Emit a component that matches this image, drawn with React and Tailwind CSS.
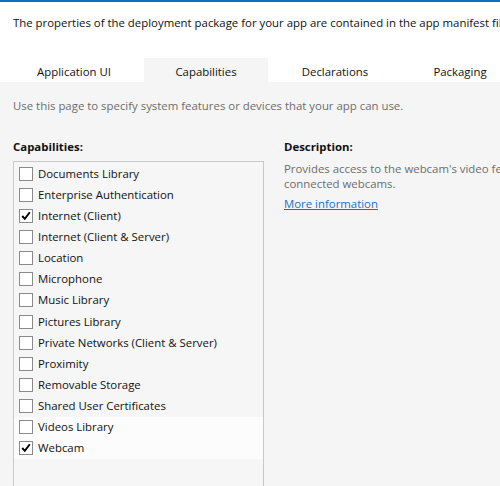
import React from "react";

const items = [
  ["Documents Library", false],
  ["Enterprise Authentication", false],
  ["Internet (Client)", true],
  ["Internet (Client & Server)", false],
  ["Location", false],
  ["Microphone", false],
  ["Music Library", false],
  ["Pictures Library", false],
  ["Private Networks (Client & Server)", false],
  ["Proximity", false],
  ["Removable Storage", false],
  ["Shared User Certificates", false],
  ["Videos Library", false],
  ["Webcam", true],
];

function Box({ checked }) {
  return (
    <div className="w-[14px] h-[14px] border border-[#8a8a8a] bg-white flex items-center justify-center shrink-0">
      {checked && (
        <svg width="10" height="10" viewBox="0 0 10 10">
          <path d="M1.2 5 L3.8 7.8 L8.8 1.2" fill="none" stroke="#000" strokeWidth="1.9" />
        </svg>
      )}
    </div>
  );
}

export default function App() {
  return (
    <div
      className="w-[500px] h-[486px] overflow-hidden bg-white text-[#111] text-[11.4px] flex flex-col"
      style={{ fontFamily: '"Open Sans", "Noto Sans", sans-serif' }}
    >
      <div className="h-[2px] bg-[#0e70c0] shrink-0" />
      <div className="h-[56px] shrink-0 pl-[13px] pt-[13px] whitespace-nowrap leading-[16px]">
        The properties of the deployment package for your app are contained in the app manifest file.
      </div>
      <div className="h-[24px] shrink-0 flex items-stretch whitespace-nowrap">
        <div className="w-[4px] shrink-0" />
        <div className="w-[140px] shrink-0 flex items-center justify-center pt-[3px]">Application UI</div>
        <div className="w-[124px] shrink-0 flex items-center justify-center pt-[3px] bg-[#f5f5f5]">Capabilities</div>
        <div className="w-[134px] shrink-0 flex items-center justify-center pt-[3px]">Declarations</div>
        <div className="w-[116px] shrink-0 flex items-center justify-center pt-[3px]">Packaging</div>
      </div>
      <div className="flex-1 bg-[#f5f5f5] flex flex-col">
        <div className="pl-[13px] pt-[16px] text-[#6d6d6d] whitespace-nowrap leading-[16px]">
          Use this page to specify system features or devices that your app can use.
        </div>
        <div className="flex mt-[25px]">
          <div className="w-[251px] ml-[13px] shrink-0 flex flex-col">
            <div className="font-bold leading-[16px] mb-[6px]">Capabilities:</div>
            <div className="border border-[#c9c9c9] bg-[#f6f6f6] pt-[1px] h-[400px] flex flex-col">
              {items.map(([label, checked], i) => (
                <div
                  key={label}
                  className={`h-[21.15px] shrink-0 flex items-center gap-[5px] pl-[5px] whitespace-nowrap ${
                    i >= 12 ? "bg-[#fcfcfc]" : ""
                  }`}
                >
                  <Box checked={checked} />
                  <span className="leading-[16px]">{label}</span>
                </div>
              ))}
            </div>
          </div>
          <div className="ml-[20px] flex flex-col whitespace-nowrap min-w-0">
            <div className="font-bold leading-[16px]">Description:</div>
            <div className="text-[#6d6d6d] leading-[15px] mt-[5.5px]">
              <div>Provides access to the webcam's video feed, which allows apps to capture snapshots and movies from</div>
              <div>connected webcams.</div>
            </div>
            <div className="leading-[16px] mt-[5.5px]">
              <a className="text-[#1e6fbf] underline">More information</a>
            </div>
          </div>
        </div>
      </div>
    </div>
  );
}
